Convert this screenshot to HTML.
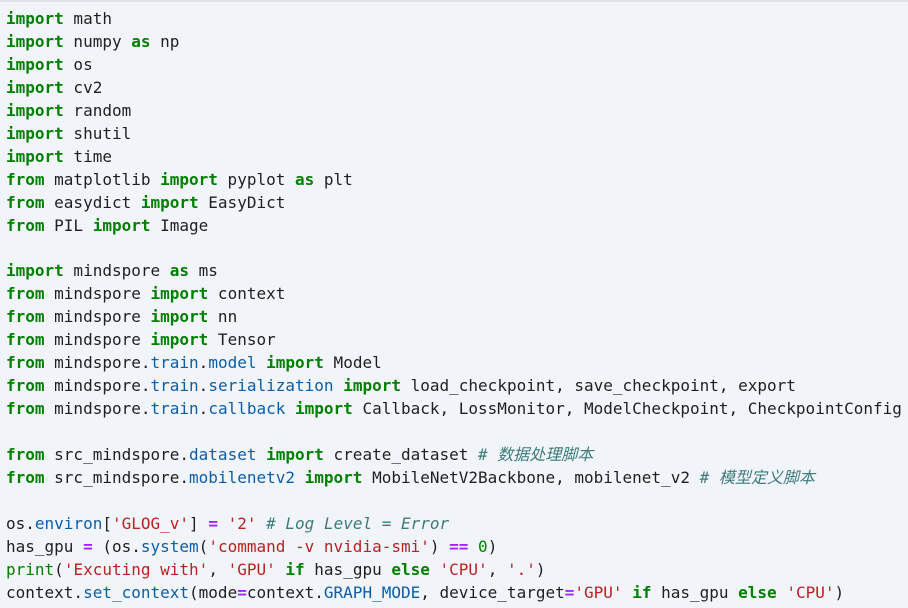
<!DOCTYPE html>
<html><head><meta charset="utf-8"><style>
html,body{margin:0;padding:0;}
body{width:908px;height:608px;background:#f1f4f9;overflow:hidden;border-top:2px solid #dfe2e6;box-sizing:border-box;}
pre{margin:0;padding:6px 0 0 6px;font-family:"DejaVu Sans Mono","Noto Sans CJK SC",monospace;font-size:16px;line-height:22.95px;color:#1f1f1f;white-space:pre;}
.k{color:#008000;font-weight:bold}
.n{color:#0b5ea8}
.s{color:#ba2121}
.o{color:#aa22ff;font-weight:bold}
.c{color:#3d7b7b;font-style:italic}
.m{color:#008000}
</style></head><body><pre><span class="k">import</span> math
<span class="k">import</span> numpy <span class="k">as</span> np
<span class="k">import</span> os
<span class="k">import</span> cv2
<span class="k">import</span> random
<span class="k">import</span> shutil
<span class="k">import</span> time
<span class="k">from</span> matplotlib <span class="k">import</span> pyplot <span class="k">as</span> plt
<span class="k">from</span> easydict <span class="k">import</span> EasyDict
<span class="k">from</span> PIL <span class="k">import</span> Image

<span class="k">import</span> mindspore <span class="k">as</span> ms
<span class="k">from</span> mindspore <span class="k">import</span> context
<span class="k">from</span> mindspore <span class="k">import</span> nn
<span class="k">from</span> mindspore <span class="k">import</span> Tensor
<span class="k">from</span> mindspore.<span class="n">train</span>.<span class="n">model</span> <span class="k">import</span> Model
<span class="k">from</span> mindspore.<span class="n">train</span>.<span class="n">serialization</span> <span class="k">import</span> load_checkpoint, save_checkpoint, export
<span class="k">from</span> mindspore.<span class="n">train</span>.<span class="n">callback</span> <span class="k">import</span> Callback, LossMonitor, ModelCheckpoint, CheckpointConfig

<span class="k">from</span> src_mindspore.<span class="n">dataset</span> <span class="k">import</span> create_dataset <span class="c"># 数据处理脚本</span>
<span class="k">from</span> src_mindspore.<span class="n">mobilenetv2</span> <span class="k">import</span> MobileNetV2Backbone, mobilenet_v2 <span class="c"># 模型定义脚本</span>

os.<span class="n">environ</span>[<span class="s">'GLOG_v'</span>] <span class="o">=</span> <span class="s">'2'</span> <span class="c"># Log Level = Error</span>
has_gpu <span class="o">=</span> (os.<span class="n">system</span>(<span class="s">'command -v nvidia-smi'</span>) <span class="o">==</span> <span class="m">0</span>)
<span class="m">print</span>(<span class="s">'Excuting with'</span>, <span class="s">'GPU'</span> <span class="k">if</span> has_gpu <span class="k">else</span> <span class="s">'CPU'</span>, <span class="s">'.'</span>)
context.<span class="n">set_context</span>(mode<span class="o">=</span>context.<span class="n">GRAPH_MODE</span>, device_target<span class="o">=</span><span class="s">'GPU'</span> <span class="k">if</span> has_gpu <span class="k">else</span> <span class="s">'CPU'</span>)</pre></body></html>
